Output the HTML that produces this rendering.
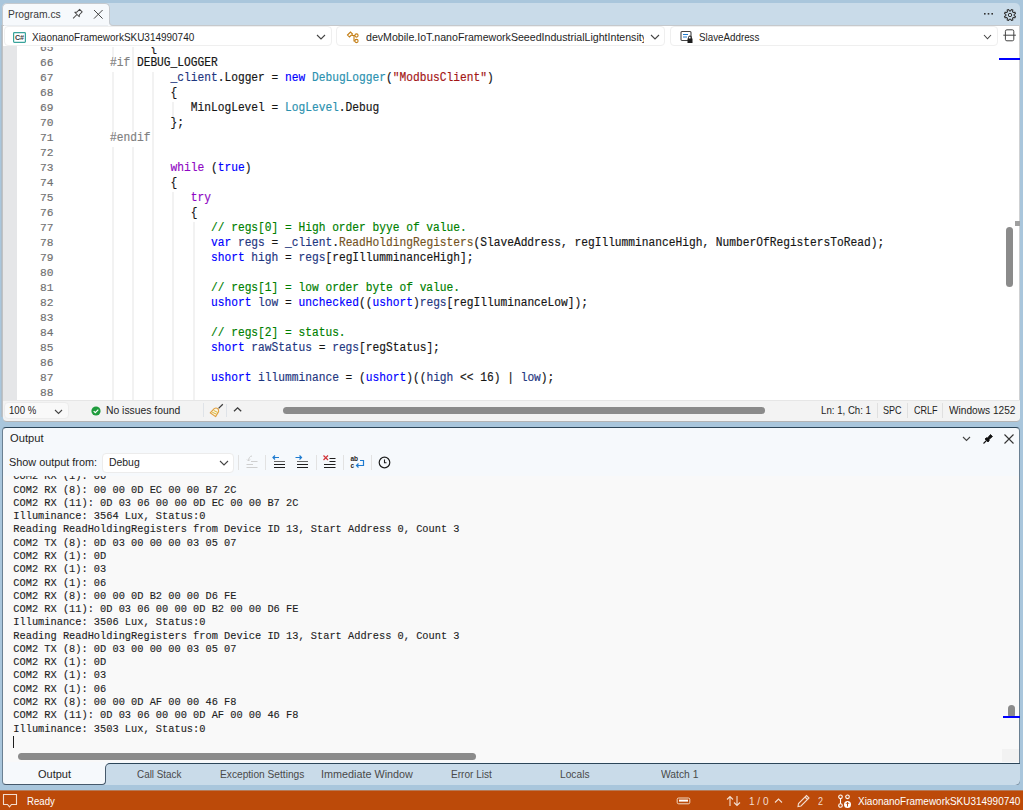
<!DOCTYPE html>
<html><head><meta charset="utf-8"><title>Program.cs - Visual Studio</title>
<style>
html,body{margin:0;padding:0;}
body{width:1023px;height:810px;position:relative;overflow:hidden;background:#a9c6dc;font-family:"Liberation Sans", sans-serif;}
.t{position:absolute;white-space:pre;}
.mono{font-family:"Liberation Mono", monospace;}
.code{-webkit-text-stroke:0.17px currentColor;}
.ostroke{-webkit-text-stroke:0.12px currentColor;}
svg{overflow:visible}
</style></head><body>
<div style="position:absolute;left:2px;top:3px;width:1018px;height:23px;background:#c9dbe9;border-radius:5px 5px 0 0;"></div>
<div style="position:absolute;left:2px;top:3px;width:108px;height:23px;background:#f6f9fc;border:1px solid #c4c9ce;border-bottom:none;border-radius:5px 5px 0 0;box-sizing:border-box;"></div>
<div class="t" style="left:8.20px;top:8.19px;font-size:11.5px;line-height:12.848px;color:#3a3a3a;font-family:'Liberation Sans', sans-serif;transform:scaleX(0.8964);transform-origin:0 0;">Program.cs</div>
<svg style="position:absolute;left:69.5px;top:8px;" width="13" height="13" viewBox="0 0 13 13"><g transform="translate(7 6.5) rotate(45)"><path d="M-1.8 -5.5 L1.8 -5.5 L1.8 -1.5 L3.2 0 L-3.2 0 L-1.8 -1.5 Z" fill="none" stroke="#444" stroke-width="0.95" stroke-linejoin="round"/><path d="M0 0 L0 5.5" stroke="#444" stroke-width="0.95"/></g></svg>
<svg style="position:absolute;left:93px;top:9px;" width="12" height="12" viewBox="0 0 12 12"><path d="M1 1 L9.6 9.6 M9.6 1 L1 9.6" stroke="#3a3a3a" stroke-width="0.95"/></svg>
<svg style="position:absolute;left:983px;top:12px;" width="12" height="4" viewBox="0 0 12 4"><rect x="1" y="1" width="1.6" height="1.6" fill="#333"/><rect x="4.7" y="1" width="1.6" height="1.6" fill="#333"/><rect x="8.4" y="1" width="1.6" height="1.6" fill="#333"/></svg>
<svg style="position:absolute;left:1002.7px;top:7.8px;" width="14" height="14" viewBox="0 0 14 14"><path d="M11.15 7.66 L12.51 8.46 L11.93 9.86 L10.40 9.47 L9.47 10.40 L9.86 11.93 L8.46 12.51 L7.66 11.15 L6.34 11.15 L5.54 12.51 L4.14 11.93 L4.53 10.40 L3.60 9.47 L2.07 9.86 L1.49 8.46 L2.85 7.66 L2.85 6.34 L1.49 5.54 L2.07 4.14 L3.60 4.53 L4.53 3.60 L4.14 2.07 L5.54 1.49 L6.34 2.85 L7.66 2.85 L8.46 1.49 L9.86 2.07 L9.47 3.60 L10.40 4.53 L11.93 4.14 L12.51 5.54 L11.15 6.34 Z" fill="none" stroke="#333" stroke-width="1.05" stroke-linejoin="round"/><circle cx="7" cy="7" r="1.7" fill="none" stroke="#333" stroke-width="1"/></svg>
<div style="position:absolute;left:3px;top:25px;width:1017px;height:21px;background:#ffffff;border-top:1px solid #c6c9cc;box-sizing:border-box;"></div>
<div style="position:absolute;left:4px;top:25px;width:105px;height:1px;background:#e9edf1;"></div>
<div style="position:absolute;left:108px;top:19px;width:6px;height:7px;background:#f6f9fc;"></div>
<div style="position:absolute;left:109px;top:18px;width:7px;height:8px;background:#c9dbe9;border-left:1px solid #c4c9ce;border-bottom:1px solid #c6c9cc;border-bottom-left-radius:4px;box-sizing:border-box;"></div>
<div style="position:absolute;left:4px;top:26px;width:328px;height:20px;background:#ffffff;border:1px solid #efefef;border-radius:4px;box-sizing:border-box;"></div>
<div style="position:absolute;left:336px;top:26px;width:329px;height:20px;background:#ffffff;border:1px solid #efefef;border-radius:4px;box-sizing:border-box;"></div>
<div style="position:absolute;left:670px;top:26px;width:328px;height:20px;background:#ffffff;border:1px solid #efefef;border-radius:4px;box-sizing:border-box;"></div>
<svg style="position:absolute;left:13px;top:32px;" width="13" height="11" viewBox="0 0 13 11"><rect x="0.6" y="0.6" width="11.8" height="9.8" rx="0.8" fill="#fff" stroke="#38a39b" stroke-width="1.2"/><text x="1.9" y="8.4" font-family="Liberation Sans" font-size="7.8" font-weight="bold" fill="#3a3a3a" textLength="9.2" lengthAdjust="spacingAndGlyphs">C#</text></svg>
<div class="t" style="left:31.80px;top:30.69px;font-size:11.5px;line-height:12.848px;color:#1e1e1e;font-family:'Liberation Sans', sans-serif;transform:scaleX(0.8660);transform-origin:0 0;">XiaonanoFrameworkSKU314990740</div>
<svg style="position:absolute;left:316.0px;top:33.6px;" width="10" height="6" viewBox="0 0 10 6"><path d="M1 1 L5.0 5 L9 1" fill="none" stroke="#444" stroke-width="1.1"/></svg>
<svg style="position:absolute;left:650.0px;top:33.6px;" width="10" height="6" viewBox="0 0 10 6"><path d="M1 1 L5.0 5 L9 1" fill="none" stroke="#444" stroke-width="1.1"/></svg>
<svg style="position:absolute;left:983.2px;top:33.800000000000004px;" width="9" height="5.8" viewBox="0 0 9 5.8"><path d="M1 1 L4.5 4.8 L8 1" fill="none" stroke="#444" stroke-width="1.1"/></svg>
<svg style="position:absolute;left:346px;top:30px;" width="14" height="14" viewBox="0 0 14 14"><path d="M1.5 5 L4.5 2 L6.5 4 L3.5 7 Z" fill="none" stroke="#c47f17" stroke-width="1.1"/><path d="M5.5 5.5 L9 5.5 M8 5.5 L8 11 L9 11" fill="none" stroke="#c47f17" stroke-width="1.1"/><circle cx="10.5" cy="5.5" r="1.6" fill="none" stroke="#c47f17" stroke-width="1.1"/><circle cx="10.5" cy="11" r="1.6" fill="none" stroke="#c47f17" stroke-width="1.1"/></svg>
<div style="position:absolute;left:360px;top:27px;width:284px;height:18px;overflow:hidden;">
<div class="t" style="left:5.50px;top:3.69px;font-size:11.5px;line-height:12.848px;color:#1e1e1e;font-family:'Liberation Sans', sans-serif;transform:scaleX(0.9216);transform-origin:0 0;">devMobile.IoT.nanoFrameworkSeeedIndustrialLightIntensity</div>
</div>
<svg style="position:absolute;left:680px;top:30px;" width="14" height="14" viewBox="0 0 14 14"><rect x="1" y="1.5" width="10" height="9" rx="1" fill="none" stroke="#444" stroke-width="1.1"/><path d="M3 4.5 L8 4.5 M3 7 L7 7" stroke="#1e7bd0" stroke-width="1.1"/><rect x="7.5" y="8.5" width="5" height="4.5" fill="#1e1e1e"/><path d="M8.5 8.8 L8.5 7.5 A1.5 1.5 0 0 1 11.5 7.5 L11.5 8.8" fill="none" stroke="#1e1e1e" stroke-width="1"/></svg>
<div class="t" style="left:698.60px;top:30.69px;font-size:11.5px;line-height:12.848px;color:#1e1e1e;font-family:'Liberation Sans', sans-serif;transform:scaleX(0.8513);transform-origin:0 0;">SlaveAddress</div>
<svg style="position:absolute;left:1003px;top:29px;" width="14" height="13" viewBox="0 0 14 13"><rect x="2.4" y="0.8" width="8.4" height="11" rx="1.5" fill="none" stroke="#444" stroke-width="1"/><path d="M0.3 6.2 L12.9 6.2" stroke="#444" stroke-width="1"/></svg>
<div style="position:absolute;left:3px;top:46px;width:1017px;height:354px;background:#ffffff;"></div>
<div style="position:absolute;left:3px;top:46px;width:14px;height:354px;background:#e5e6e8;"></div>
<div style="position:absolute;left:0;top:47px;width:1020px;height:353px;overflow:hidden;">
<div style="position:absolute;left:112px;top:-20px;width:2px;height:30px;background:#f2f2f2"></div><div style="position:absolute;left:112px;top:25px;width:2px;height:60px;background:#f2f2f2"></div><div style="position:absolute;left:112px;top:100px;width:2px;height:255px;background:#f2f2f2"></div><div style="position:absolute;left:132px;top:-20px;width:2px;height:105px;background:#f2f2f2"></div><div style="position:absolute;left:132px;top:100px;width:2px;height:255px;background:#f2f2f2"></div><div style="position:absolute;left:152px;top:25px;width:2px;height:330px;background:#f2f2f2"></div><div style="position:absolute;left:172px;top:55px;width:2px;height:15px;background:#f2f2f2"></div><div style="position:absolute;left:172px;top:145px;width:2px;height:210px;background:#f2f2f2"></div><div style="position:absolute;left:193px;top:175px;width:2px;height:180px;background:#f2f2f2"></div><div class="t mono code" style="left:39.84px;top:-5.80px;height:15px;line-height:15px;font-size:11.8px;color:#707070;transform:scaleX(0.9506);transform-origin:0 0;">65</div><div class="t mono code" style="left:109.6px;top:-6px;height:15px;line-height:15px;font-size:12px;transform:scaleX(0.9347);transform-origin:0 0;"><span style="color:#161616">      {</span></div><div class="t mono code" style="left:39.84px;top:9.20px;height:15px;line-height:15px;font-size:11.8px;color:#707070;transform:scaleX(0.9506);transform-origin:0 0;">66</div><div class="t mono code" style="left:109.6px;top:9px;height:15px;line-height:15px;font-size:12px;transform:scaleX(0.9347);transform-origin:0 0;"><span style="color:#808080">#if</span><span style="color:#161616"> DEBUG_LOGGER</span></div><div class="t mono code" style="left:39.84px;top:24.20px;height:15px;line-height:15px;font-size:11.8px;color:#707070;transform:scaleX(0.9506);transform-origin:0 0;">67</div><div class="t mono code" style="left:109.6px;top:24px;height:15px;line-height:15px;font-size:12px;transform:scaleX(0.9347);transform-origin:0 0;"><span style="color:#161616">         </span><span style="color:#1f377f">_client</span><span style="color:#161616">.Logger = </span><span style="color:#0000ff">new</span><span style="color:#161616"> </span><span style="color:#2b91af">DebugLogger</span><span style="color:#161616">(</span><span style="color:#a31515">&quot;ModbusClient&quot;</span><span style="color:#161616">)</span></div><div class="t mono code" style="left:39.84px;top:39.20px;height:15px;line-height:15px;font-size:11.8px;color:#707070;transform:scaleX(0.9506);transform-origin:0 0;">68</div><div class="t mono code" style="left:109.6px;top:39px;height:15px;line-height:15px;font-size:12px;transform:scaleX(0.9347);transform-origin:0 0;"><span style="color:#161616">         {</span></div><div class="t mono code" style="left:39.84px;top:54.20px;height:15px;line-height:15px;font-size:11.8px;color:#707070;transform:scaleX(0.9506);transform-origin:0 0;">69</div><div class="t mono code" style="left:109.6px;top:54px;height:15px;line-height:15px;font-size:12px;transform:scaleX(0.9347);transform-origin:0 0;"><span style="color:#161616">            MinLogLevel = </span><span style="color:#2b91af">LogLevel</span><span style="color:#161616">.Debug</span></div><div class="t mono code" style="left:39.84px;top:69.20px;height:15px;line-height:15px;font-size:11.8px;color:#707070;transform:scaleX(0.9506);transform-origin:0 0;">70</div><div class="t mono code" style="left:109.6px;top:69px;height:15px;line-height:15px;font-size:12px;transform:scaleX(0.9347);transform-origin:0 0;"><span style="color:#161616">         };</span></div><div class="t mono code" style="left:39.84px;top:84.20px;height:15px;line-height:15px;font-size:11.8px;color:#707070;transform:scaleX(0.9506);transform-origin:0 0;">71</div><div class="t mono code" style="left:109.6px;top:84px;height:15px;line-height:15px;font-size:12px;transform:scaleX(0.9347);transform-origin:0 0;"><span style="color:#808080">#endif</span></div><div class="t mono code" style="left:39.84px;top:99.20px;height:15px;line-height:15px;font-size:11.8px;color:#707070;transform:scaleX(0.9506);transform-origin:0 0;">72</div><div class="t mono code" style="left:39.84px;top:114.20px;height:15px;line-height:15px;font-size:11.8px;color:#707070;transform:scaleX(0.9506);transform-origin:0 0;">73</div><div class="t mono code" style="left:109.6px;top:114px;height:15px;line-height:15px;font-size:12px;transform:scaleX(0.9347);transform-origin:0 0;"><span style="color:#161616">         </span><span style="color:#8f08c4">while</span><span style="color:#161616"> (</span><span style="color:#0000ff">true</span><span style="color:#161616">)</span></div><div class="t mono code" style="left:39.84px;top:129.20px;height:15px;line-height:15px;font-size:11.8px;color:#707070;transform:scaleX(0.9506);transform-origin:0 0;">74</div><div class="t mono code" style="left:109.6px;top:129px;height:15px;line-height:15px;font-size:12px;transform:scaleX(0.9347);transform-origin:0 0;"><span style="color:#161616">         {</span></div><div class="t mono code" style="left:39.84px;top:144.20px;height:15px;line-height:15px;font-size:11.8px;color:#707070;transform:scaleX(0.9506);transform-origin:0 0;">75</div><div class="t mono code" style="left:109.6px;top:144px;height:15px;line-height:15px;font-size:12px;transform:scaleX(0.9347);transform-origin:0 0;"><span style="color:#161616">            </span><span style="color:#8f08c4">try</span></div><div class="t mono code" style="left:39.84px;top:159.20px;height:15px;line-height:15px;font-size:11.8px;color:#707070;transform:scaleX(0.9506);transform-origin:0 0;">76</div><div class="t mono code" style="left:109.6px;top:159px;height:15px;line-height:15px;font-size:12px;transform:scaleX(0.9347);transform-origin:0 0;"><span style="color:#161616">            {</span></div><div class="t mono code" style="left:39.84px;top:174.20px;height:15px;line-height:15px;font-size:11.8px;color:#707070;transform:scaleX(0.9506);transform-origin:0 0;">77</div><div class="t mono code" style="left:109.6px;top:174px;height:15px;line-height:15px;font-size:12px;transform:scaleX(0.9347);transform-origin:0 0;"><span style="color:#161616">               </span><span style="color:#008000">// regs[0] = High order byye of value.</span></div><div class="t mono code" style="left:39.84px;top:189.20px;height:15px;line-height:15px;font-size:11.8px;color:#707070;transform:scaleX(0.9506);transform-origin:0 0;">78</div><div class="t mono code" style="left:109.6px;top:189px;height:15px;line-height:15px;font-size:12px;transform:scaleX(0.9347);transform-origin:0 0;"><span style="color:#161616">               </span><span style="color:#0000ff">var</span><span style="color:#161616"> </span><span style="color:#1f377f">regs</span><span style="color:#161616"> = </span><span style="color:#1f377f">_client</span><span style="color:#161616">.</span><span style="color:#74531f">ReadHoldingRegisters</span><span style="color:#161616">(SlaveAddress, regIllumminanceHigh, NumberOfRegistersToRead);</span></div><div class="t mono code" style="left:39.84px;top:204.20px;height:15px;line-height:15px;font-size:11.8px;color:#707070;transform:scaleX(0.9506);transform-origin:0 0;">79</div><div class="t mono code" style="left:109.6px;top:204px;height:15px;line-height:15px;font-size:12px;transform:scaleX(0.9347);transform-origin:0 0;"><span style="color:#161616">               </span><span style="color:#0000ff">short</span><span style="color:#161616"> </span><span style="color:#1f377f">high</span><span style="color:#161616"> = </span><span style="color:#1f377f">regs</span><span style="color:#161616">[regIllumminanceHigh];</span></div><div class="t mono code" style="left:39.84px;top:219.20px;height:15px;line-height:15px;font-size:11.8px;color:#707070;transform:scaleX(0.9506);transform-origin:0 0;">80</div><div class="t mono code" style="left:39.84px;top:234.20px;height:15px;line-height:15px;font-size:11.8px;color:#707070;transform:scaleX(0.9506);transform-origin:0 0;">81</div><div class="t mono code" style="left:109.6px;top:234px;height:15px;line-height:15px;font-size:12px;transform:scaleX(0.9347);transform-origin:0 0;"><span style="color:#161616">               </span><span style="color:#008000">// regs[1] = low order byte of value.</span></div><div class="t mono code" style="left:39.84px;top:249.20px;height:15px;line-height:15px;font-size:11.8px;color:#707070;transform:scaleX(0.9506);transform-origin:0 0;">82</div><div class="t mono code" style="left:109.6px;top:249px;height:15px;line-height:15px;font-size:12px;transform:scaleX(0.9347);transform-origin:0 0;"><span style="color:#161616">               </span><span style="color:#0000ff">ushort</span><span style="color:#161616"> </span><span style="color:#1f377f">low</span><span style="color:#161616"> = </span><span style="color:#0000ff">unchecked</span><span style="color:#161616">((</span><span style="color:#0000ff">ushort</span><span style="color:#161616">)</span><span style="color:#1f377f">regs</span><span style="color:#161616">[regIlluminanceLow]);</span></div><div class="t mono code" style="left:39.84px;top:264.20px;height:15px;line-height:15px;font-size:11.8px;color:#707070;transform:scaleX(0.9506);transform-origin:0 0;">83</div><div class="t mono code" style="left:39.84px;top:279.20px;height:15px;line-height:15px;font-size:11.8px;color:#707070;transform:scaleX(0.9506);transform-origin:0 0;">84</div><div class="t mono code" style="left:109.6px;top:279px;height:15px;line-height:15px;font-size:12px;transform:scaleX(0.9347);transform-origin:0 0;"><span style="color:#161616">               </span><span style="color:#008000">// regs[2] = status.</span></div><div class="t mono code" style="left:39.84px;top:294.20px;height:15px;line-height:15px;font-size:11.8px;color:#707070;transform:scaleX(0.9506);transform-origin:0 0;">85</div><div class="t mono code" style="left:109.6px;top:294px;height:15px;line-height:15px;font-size:12px;transform:scaleX(0.9347);transform-origin:0 0;"><span style="color:#161616">               </span><span style="color:#0000ff">short</span><span style="color:#161616"> </span><span style="color:#1f377f">rawStatus</span><span style="color:#161616"> = </span><span style="color:#1f377f">regs</span><span style="color:#161616">[regStatus];</span></div><div class="t mono code" style="left:39.84px;top:309.20px;height:15px;line-height:15px;font-size:11.8px;color:#707070;transform:scaleX(0.9506);transform-origin:0 0;">86</div><div class="t mono code" style="left:39.84px;top:324.20px;height:15px;line-height:15px;font-size:11.8px;color:#707070;transform:scaleX(0.9506);transform-origin:0 0;">87</div><div class="t mono code" style="left:109.6px;top:324px;height:15px;line-height:15px;font-size:12px;transform:scaleX(0.9347);transform-origin:0 0;"><span style="color:#161616">               </span><span style="color:#0000ff">ushort</span><span style="color:#161616"> </span><span style="color:#1f377f">illumminance</span><span style="color:#161616"> = (</span><span style="color:#0000ff">ushort</span><span style="color:#161616">)((</span><span style="color:#1f377f">high</span><span style="color:#161616"> &lt;&lt; 16) | </span><span style="color:#1f377f">low</span><span style="color:#161616">);</span></div><div class="t mono code" style="left:39.84px;top:339.20px;height:15px;line-height:15px;font-size:11.8px;color:#707070;transform:scaleX(0.9506);transform-origin:0 0;">88</div>
</div>
<div style="position:absolute;left:2px;top:25px;width:1px;height:392px;background:#bfc1c3;"></div>
<div style="position:absolute;left:1px;top:25px;width:1px;height:392px;background:#adbcc8;"></div>
<div style="position:absolute;left:1019px;top:25px;width:1px;height:392px;background:#cfd1d3;"></div>
<div style="position:absolute;left:999px;top:58px;width:21px;height:2px;background:#0000ff;"></div>
<div style="position:absolute;left:1006px;top:227px;width:7px;height:60px;background:#8b8b8b;border-radius:3.5px;"></div>
<div style="position:absolute;left:1015px;top:221px;width:5px;height:5px;background:#a0a0a0;"></div>
<div style="position:absolute;left:3px;top:400px;width:1017px;height:22px;background:#f3f3f3;border-top:1px solid #e6e6e6;border-bottom:1px solid #b4b4b4;box-sizing:border-box;border-radius:0 0 4px 4px;"></div>
<div style="position:absolute;left:4px;top:402px;width:65px;height:17px;background:#f9f9f9;border:1px solid #ececec;border-radius:4px;box-sizing:border-box;"></div>
<div class="t" style="left:8.80px;top:404.39px;font-size:11.5px;line-height:12.848px;color:#1e1e1e;font-family:'Liberation Sans', sans-serif;transform:scaleX(0.8342);transform-origin:0 0;">100 %</div>
<svg style="position:absolute;left:54.0px;top:408.75px;" width="9" height="5.5" viewBox="0 0 9 5.5"><path d="M1 1 L4.5 4.5 L8 1" fill="none" stroke="#444" stroke-width="1.1"/></svg>
<svg style="position:absolute;left:91px;top:403px;top:406px;" width="10" height="10" viewBox="0 0 10 10"><circle cx="5" cy="5" r="4.6" fill="#1f9c3d"/><path d="M2.7 5.1 L4.3 6.6 L7.3 3.6" fill="none" stroke="#fff" stroke-width="1.2"/></svg>
<div class="t" style="left:105.60px;top:404.39px;font-size:11.5px;line-height:12.848px;color:#1e1e1e;font-family:'Liberation Sans', sans-serif;transform:scaleX(0.8998);transform-origin:0 0;">No issues found</div>
<div style="position:absolute;left:203px;top:403px;width:1px;height:14px;background:#dfe3e8;"></div>
<svg style="position:absolute;left:209px;top:403px;" width="16" height="16" viewBox="0 0 16 16"><path d="M13.8 1.2 L9.6 5.4" stroke="#3c3c3c" stroke-width="1.3"/><path d="M5.2 5.6 C7.5 4.2 10.2 5.6 9.6 8.6 L6.6 13.6 L1.2 9.8 Z" fill="#fbf4e4" stroke="#e0a040" stroke-width="1.1" stroke-linejoin="round"/><path d="M3.2 9.2 L7.5 11.2 M4.6 7.4 L8.6 9.4" stroke="#d9b83a" stroke-width="1"/></svg>
<div style="position:absolute;left:226px;top:404px;width:1px;height:13px;background:#dfe3e8;"></div>
<svg style="position:absolute;left:232.8px;top:406px;" width="10" height="7" viewBox="0 0 10 7"><path d="M1 5.2 L4.6 1.8 L8.2 5.2" fill="none" stroke="#3a3a3a" stroke-width="1.3"/></svg>
<div style="position:absolute;left:283px;top:406.5px;width:482px;height:7px;background:#8b8b8b;border-radius:3.5px;"></div>
<div class="t" style="left:821.00px;top:404.39px;font-size:11.5px;line-height:12.848px;color:#1e1e1e;font-family:'Liberation Sans', sans-serif;transform:scaleX(0.8410);transform-origin:0 0;">Ln: 1, Ch: 1</div>
<div style="position:absolute;left:877px;top:403px;width:1px;height:15px;background:#e0e0e0;"></div>
<div class="t" style="left:883.30px;top:404.39px;font-size:11.5px;line-height:12.848px;color:#1e1e1e;font-family:'Liberation Sans', sans-serif;transform:scaleX(0.7866);transform-origin:0 0;">SPC</div>
<div style="position:absolute;left:907px;top:403px;width:1px;height:15px;background:#e0e0e0;"></div>
<div class="t" style="left:913.80px;top:404.39px;font-size:11.5px;line-height:12.848px;color:#1e1e1e;font-family:'Liberation Sans', sans-serif;transform:scaleX(0.7859);transform-origin:0 0;">CRLF</div>
<div style="position:absolute;left:942px;top:403px;width:1px;height:15px;background:#e0e0e0;"></div>
<div class="t" style="left:949.40px;top:404.39px;font-size:11.5px;line-height:12.848px;color:#1e1e1e;font-family:'Liberation Sans', sans-serif;transform:scaleX(0.8803);transform-origin:0 0;">Windows 1252</div>
<div style="position:absolute;left:2px;top:427px;width:1018px;height:358px;background:#f6f9fc;border:1px solid #6a8092;border-top-color:#2c4558;border-bottom-color:#46596b;border-radius:4px;box-sizing:border-box;"></div>
<div class="t" style="left:10.00px;top:431.89px;font-size:11.5px;line-height:12.848px;color:#1e1e1e;font-family:'Liberation Sans', sans-serif;transform:scaleX(0.9704);transform-origin:0 0;">Output</div>
<svg style="position:absolute;left:962.0px;top:436.25px;" width="9" height="5.5" viewBox="0 0 9 5.5"><path d="M1 1 L4.5 4.5 L8 1" fill="none" stroke="#444" stroke-width="1.1"/></svg>
<svg style="position:absolute;left:982px;top:433px;" width="12" height="12" viewBox="0 0 12 12"><path d="M1.5 10.5 L4.5 7.5" stroke="#111" stroke-width="1.1"/><path d="M3 6 L6 9 L7.2 7.8 L7 6.5 L10.5 3.5 L8.5 1.5 L5.5 5 L4.2 4.8 Z" fill="#111" stroke="#111" stroke-width="0.8"/></svg>
<svg style="position:absolute;left:1003px;top:433px;" width="12" height="12" viewBox="0 0 12 12"><path d="M1.5 1.5 L10.5 10.5 M10.5 1.5 L1.5 10.5" stroke="#333" stroke-width="1.1"/></svg>
<div class="t" style="left:8.80px;top:455.89px;font-size:11.5px;line-height:12.848px;color:#1e1e1e;font-family:'Liberation Sans', sans-serif;transform:scaleX(0.9430);transform-origin:0 0;">Show output from:</div>
<div style="position:absolute;left:102px;top:452.5px;width:132px;height:20px;background:#ffffff;border:1px solid #ececec;border-radius:4px;box-sizing:border-box;"></div>
<div class="t" style="left:109.00px;top:455.89px;font-size:11.5px;line-height:12.848px;color:#1e1e1e;font-family:'Liberation Sans', sans-serif;transform:scaleX(0.9060);transform-origin:0 0;">Debug</div>
<svg style="position:absolute;left:218.5px;top:459.5px;" width="10" height="6" viewBox="0 0 10 6"><path d="M1 1 L5.0 5 L9 1" fill="none" stroke="#444" stroke-width="1.1"/></svg>
<div style="position:absolute;left:238px;top:455px;width:1px;height:15px;background:#e2e2e2;"></div>
<div style="position:absolute;left:265px;top:455px;width:1px;height:15px;background:#e2e2e2;"></div>
<div style="position:absolute;left:315.5px;top:455px;width:1px;height:15px;background:#e2e2e2;"></div>
<div style="position:absolute;left:343px;top:455px;width:1px;height:15px;background:#e2e2e2;"></div>
<div style="position:absolute;left:370.5px;top:455px;width:1px;height:15px;background:#e2e2e2;"></div>
<svg style="position:absolute;left:245px;top:454px;" width="14" height="15" viewBox="0 0 14 15"><path d="M7 2 C5 2 3.5 4 3.5 7 M2 5.5 L3.5 7 L5 5.5" fill="none" stroke="#cfcfcf" stroke-width="1"/><path d="M6 7.5 L12.5 7.5 M1.5 10.5 L8 10.5 M1.5 13.5 L12.5 13.5" stroke="#cfcfcf" stroke-width="1"/></svg>
<svg style="position:absolute;left:271px;top:454px;" width="16" height="15" viewBox="0 0 16 15"><path d="M8 3.5 L2 3.5 M4 1.5 L2 3.5 L4 5.5" fill="none" stroke="#1e7bd0" stroke-width="1.2"/><path d="M3 7.5 L14 7.5" stroke="#666" stroke-width="1"/><path d="M3 10.5 L14 10.5 M3 13.5 L14 13.5" stroke="#1e1e1e" stroke-width="1"/></svg>
<svg style="position:absolute;left:294px;top:454px;" width="16" height="15" viewBox="0 0 16 15"><path d="M1.5 3.5 L7.5 3.5 M5.5 1.5 L7.5 3.5 L5.5 5.5" fill="none" stroke="#1e7bd0" stroke-width="1.2"/><path d="M3 7.5 L14 7.5" stroke="#666" stroke-width="1"/><path d="M3 10.5 L14 10.5 M3 13.5 L14 13.5" stroke="#1e1e1e" stroke-width="1"/></svg>
<svg style="position:absolute;left:322px;top:454px;" width="15" height="15" viewBox="0 0 15 15"><path d="M1.5 1.5 L6 6 M6 1.5 L1.5 6" stroke="#d13438" stroke-width="1.2"/><path d="M7.5 4.5 L13.5 4.5 M7.5 7.5 L13.5 7.5 M2 10.5 L13.5 10.5 M2 13.5 L13.5 13.5" stroke="#1e1e1e" stroke-width="1.1"/></svg>
<svg style="position:absolute;left:349px;top:454px;" width="17" height="16" viewBox="0 0 17 16"><text x="1.5" y="7" font-family="Liberation Sans" font-size="6.5" font-weight="bold" fill="#1e1e1e">ab</text><text x="1.5" y="13.5" font-family="Liberation Sans" font-size="6.5" font-weight="bold" fill="#1e1e1e">c</text><path d="M11 6.5 L14.5 6.5 L14.5 11.5 L7.5 11.5 M9.5 9.5 L7.5 11.5 L9.5 13.5" fill="none" stroke="#1e7bd0" stroke-width="1.2"/></svg>
<svg style="position:absolute;left:378px;top:456px;" width="13" height="13" viewBox="0 0 13 13"><circle cx="6.5" cy="6.5" r="5.3" fill="none" stroke="#1e1e1e" stroke-width="1.2"/><path d="M6.5 3.5 L6.5 6.8 L8.5 6.8" fill="none" stroke="#1e1e1e" stroke-width="1.1"/></svg>
<div style="position:absolute;left:3px;top:476px;width:1016px;height:286px;background:#f9f9f9;overflow:hidden;">
<div class="t mono ostroke" style="left:10.30px;top:-4.63px;line-height:11.702px;font-size:10.33px;color:#1e1e1e;">COM2 RX (1): 06</div>
<div class="t mono ostroke" style="left:10.30px;top:8.64px;line-height:11.702px;font-size:10.33px;color:#1e1e1e;">COM2 RX (8): 00 00 0D EC 00 00 B7 2C</div>
<div class="t mono ostroke" style="left:10.30px;top:21.91px;line-height:11.702px;font-size:10.33px;color:#1e1e1e;">COM2 RX (11): 0D 03 06 00 00 0D EC 00 00 B7 2C</div>
<div class="t mono ostroke" style="left:10.30px;top:35.18px;line-height:11.702px;font-size:10.33px;color:#1e1e1e;">Illuminance: 3564 Lux, Status:0</div>
<div class="t mono ostroke" style="left:10.30px;top:48.45px;line-height:11.702px;font-size:10.33px;color:#1e1e1e;">Reading ReadHoldingRegisters from Device ID 13, Start Address 0, Count 3</div>
<div class="t mono ostroke" style="left:10.30px;top:61.72px;line-height:11.702px;font-size:10.33px;color:#1e1e1e;">COM2 TX (8): 0D 03 00 00 00 03 05 07</div>
<div class="t mono ostroke" style="left:10.30px;top:74.99px;line-height:11.702px;font-size:10.33px;color:#1e1e1e;">COM2 RX (1): 0D</div>
<div class="t mono ostroke" style="left:10.30px;top:88.26px;line-height:11.702px;font-size:10.33px;color:#1e1e1e;">COM2 RX (1): 03</div>
<div class="t mono ostroke" style="left:10.30px;top:101.53px;line-height:11.702px;font-size:10.33px;color:#1e1e1e;">COM2 RX (1): 06</div>
<div class="t mono ostroke" style="left:10.30px;top:114.80px;line-height:11.702px;font-size:10.33px;color:#1e1e1e;">COM2 RX (8): 00 00 0D B2 00 00 D6 FE</div>
<div class="t mono ostroke" style="left:10.30px;top:128.07px;line-height:11.702px;font-size:10.33px;color:#1e1e1e;">COM2 RX (11): 0D 03 06 00 00 0D B2 00 00 D6 FE</div>
<div class="t mono ostroke" style="left:10.30px;top:141.34px;line-height:11.702px;font-size:10.33px;color:#1e1e1e;">Illuminance: 3506 Lux, Status:0</div>
<div class="t mono ostroke" style="left:10.30px;top:154.61px;line-height:11.702px;font-size:10.33px;color:#1e1e1e;">Reading ReadHoldingRegisters from Device ID 13, Start Address 0, Count 3</div>
<div class="t mono ostroke" style="left:10.30px;top:167.88px;line-height:11.702px;font-size:10.33px;color:#1e1e1e;">COM2 TX (8): 0D 03 00 00 00 03 05 07</div>
<div class="t mono ostroke" style="left:10.30px;top:181.15px;line-height:11.702px;font-size:10.33px;color:#1e1e1e;">COM2 RX (1): 0D</div>
<div class="t mono ostroke" style="left:10.30px;top:194.42px;line-height:11.702px;font-size:10.33px;color:#1e1e1e;">COM2 RX (1): 03</div>
<div class="t mono ostroke" style="left:10.30px;top:207.69px;line-height:11.702px;font-size:10.33px;color:#1e1e1e;">COM2 RX (1): 06</div>
<div class="t mono ostroke" style="left:10.30px;top:220.96px;line-height:11.702px;font-size:10.33px;color:#1e1e1e;">COM2 RX (8): 00 00 0D AF 00 00 46 F8</div>
<div class="t mono ostroke" style="left:10.30px;top:234.23px;line-height:11.702px;font-size:10.33px;color:#1e1e1e;">COM2 RX (11): 0D 03 06 00 00 0D AF 00 00 46 F8</div>
<div class="t mono ostroke" style="left:10.30px;top:247.50px;line-height:11.702px;font-size:10.33px;color:#1e1e1e;">Illuminance: 3503 Lux, Status:0</div>
</div>
<div style="position:absolute;left:13px;top:736px;width:1px;height:12px;background:#1e1e1e;"></div>
<div style="position:absolute;left:18px;top:752.5px;width:458px;height:7px;background:#8b8b8b;border-radius:3.5px;"></div>
<div style="position:absolute;left:1002px;top:749px;width:17px;height:13px;background:#f2f2f2;"></div>
<div style="position:absolute;left:1008px;top:705px;width:7px;height:13px;background:#8b8b8b;border-radius:3.5px;"></div>
<div style="position:absolute;left:1003px;top:716px;width:17px;height:2px;background:#0000ff;"></div>
<div style="position:absolute;left:105px;top:763px;width:915px;height:22px;background:#c9dbe9;border-top:1px solid #2c4558;border-left:1px solid #46596b;border-top-left-radius:5px;border-bottom-right-radius:5px;box-sizing:border-box;"></div>
<div style="position:absolute;left:99px;top:777px;width:8px;height:8px;background:#c9dbe9;"></div>
<div style="position:absolute;left:98px;top:776px;width:8px;height:9px;background:#f6f9fc;border-right:1px solid #46596b;border-bottom:1px solid #46596b;border-bottom-right-radius:4px;box-sizing:border-box;"></div>
<div class="t" style="left:37.60px;top:767.99px;font-size:11.5px;line-height:12.848px;color:#1e1e1e;font-family:'Liberation Sans', sans-serif;transform:scaleX(0.9559);transform-origin:0 0;">Output</div>
<div class="t" style="left:136.50px;top:767.99px;font-size:11.5px;line-height:12.848px;color:#4a4a4a;font-family:'Liberation Sans', sans-serif;transform:scaleX(0.8596);transform-origin:0 0;">Call Stack</div>
<div class="t" style="left:220.40px;top:767.99px;font-size:11.5px;line-height:12.848px;color:#4a4a4a;font-family:'Liberation Sans', sans-serif;transform:scaleX(0.8851);transform-origin:0 0;">Exception Settings</div>
<div class="t" style="left:321.00px;top:767.99px;font-size:11.5px;line-height:12.848px;color:#4a4a4a;font-family:'Liberation Sans', sans-serif;transform:scaleX(0.9399);transform-origin:0 0;">Immediate Window</div>
<div class="t" style="left:450.80px;top:767.99px;font-size:11.5px;line-height:12.848px;color:#4a4a4a;font-family:'Liberation Sans', sans-serif;transform:scaleX(0.8768);transform-origin:0 0;">Error List</div>
<div class="t" style="left:560.40px;top:767.99px;font-size:11.5px;line-height:12.848px;color:#4a4a4a;font-family:'Liberation Sans', sans-serif;transform:scaleX(0.8875);transform-origin:0 0;">Locals</div>
<div class="t" style="left:661.10px;top:767.99px;font-size:11.5px;line-height:12.848px;color:#4a4a4a;font-family:'Liberation Sans', sans-serif;transform:scaleX(0.8957);transform-origin:0 0;">Watch 1</div>
<div style="position:absolute;left:0px;top:790px;width:1023px;height:1px;background:#b77a57;"></div>
<div style="position:absolute;left:0px;top:791px;width:1023px;height:19px;background:#bc4a09;"></div>
<svg style="position:absolute;left:2px;top:793px;" width="17" height="16" viewBox="0 0 17 16"><path d="M1.5 1.5 L14.5 1.5 L14.5 11.5 L9.5 11.5 L7.5 13.8 L5.5 11.5 L1.5 11.5 Z" fill="none" stroke="#f3ddd0" stroke-width="1.1"/></svg>
<div class="t" style="left:26.70px;top:794.79px;font-size:11.5px;line-height:12.848px;color:#ffffff;font-family:'Liberation Sans', sans-serif;transform:scaleX(0.8363);transform-origin:0 0;">Ready</div>
<svg style="position:absolute;left:676px;top:797px;" width="15" height="8" viewBox="0 0 15 8"><rect x="1.2" y="1" width="12.6" height="5.8" rx="1.4" fill="none" stroke="#f0d8c4" stroke-width="1"/><rect x="3" y="2.6" width="9" height="2" fill="#ffffff"/></svg>
<svg style="position:absolute;left:726px;top:795px;" width="15" height="12" viewBox="0 0 15 12"><path d="M4 11 L4 1.5 M1 4.5 L4 1.5 L7 4.5 M11 1 L11 10.5 M8 7.5 L11 10.5 L14 7.5" fill="none" stroke="#f3ddd0" stroke-width="1.1"/></svg>
<div class="t" style="left:749.00px;top:795.19px;font-size:11.5px;line-height:12.848px;color:#f3ddd0;font-family:'Liberation Sans', sans-serif;transform:scaleX(0.8714);transform-origin:0 0;">1 / 0</div>
<svg style="position:absolute;left:774px;top:797px;" width="10" height="7" viewBox="0 0 10 7"><path d="M1 5.5 L4.5 2 L8 5.5" fill="none" stroke="#f3ddd0" stroke-width="1.1"/></svg>
<svg style="position:absolute;left:796px;top:794px;" width="15" height="14" viewBox="0 0 15 14"><path d="M2 12.5 L2.5 9.5 L10.5 1.5 L13 4 L5 12 Z M9 3 L11.5 5.5" fill="none" stroke="#f3ddd0" stroke-width="1.1"/></svg>
<div class="t" style="left:818.00px;top:795.19px;font-size:11.5px;line-height:12.848px;color:#f3ddd0;font-family:'Liberation Sans', sans-serif;transform:scaleX(0.7818);transform-origin:0 0;">2</div>
<svg style="position:absolute;left:837px;top:794px;" width="15" height="15" viewBox="0 0 15 15"><circle cx="3.5" cy="2.8" r="1.8" fill="none" stroke="#fff" stroke-width="1.1"/><circle cx="3.5" cy="11.5" r="1.8" fill="none" stroke="#fff" stroke-width="1.1"/><path d="M3.5 4.6 L3.5 9.7" stroke="#fff" stroke-width="1.1"/><circle cx="10.5" cy="2.8" r="1.8" fill="none" stroke="#fff" stroke-width="1.1"/><circle cx="10.5" cy="10.5" r="3.5" fill="#fff"/><path d="M10.5 8.3 L10.5 12.5 M9 9.8 L10.5 8.3 L12 9.8" fill="none" stroke="#bc4a09" stroke-width="1"/></svg>
<div class="t" style="left:858.30px;top:795.39px;font-size:11.5px;line-height:12.848px;color:#ffffff;font-family:'Liberation Sans', sans-serif;transform:scaleX(0.8665);transform-origin:0 0;">XiaonanoFrameworkSKU314990740</div>
</body></html>
